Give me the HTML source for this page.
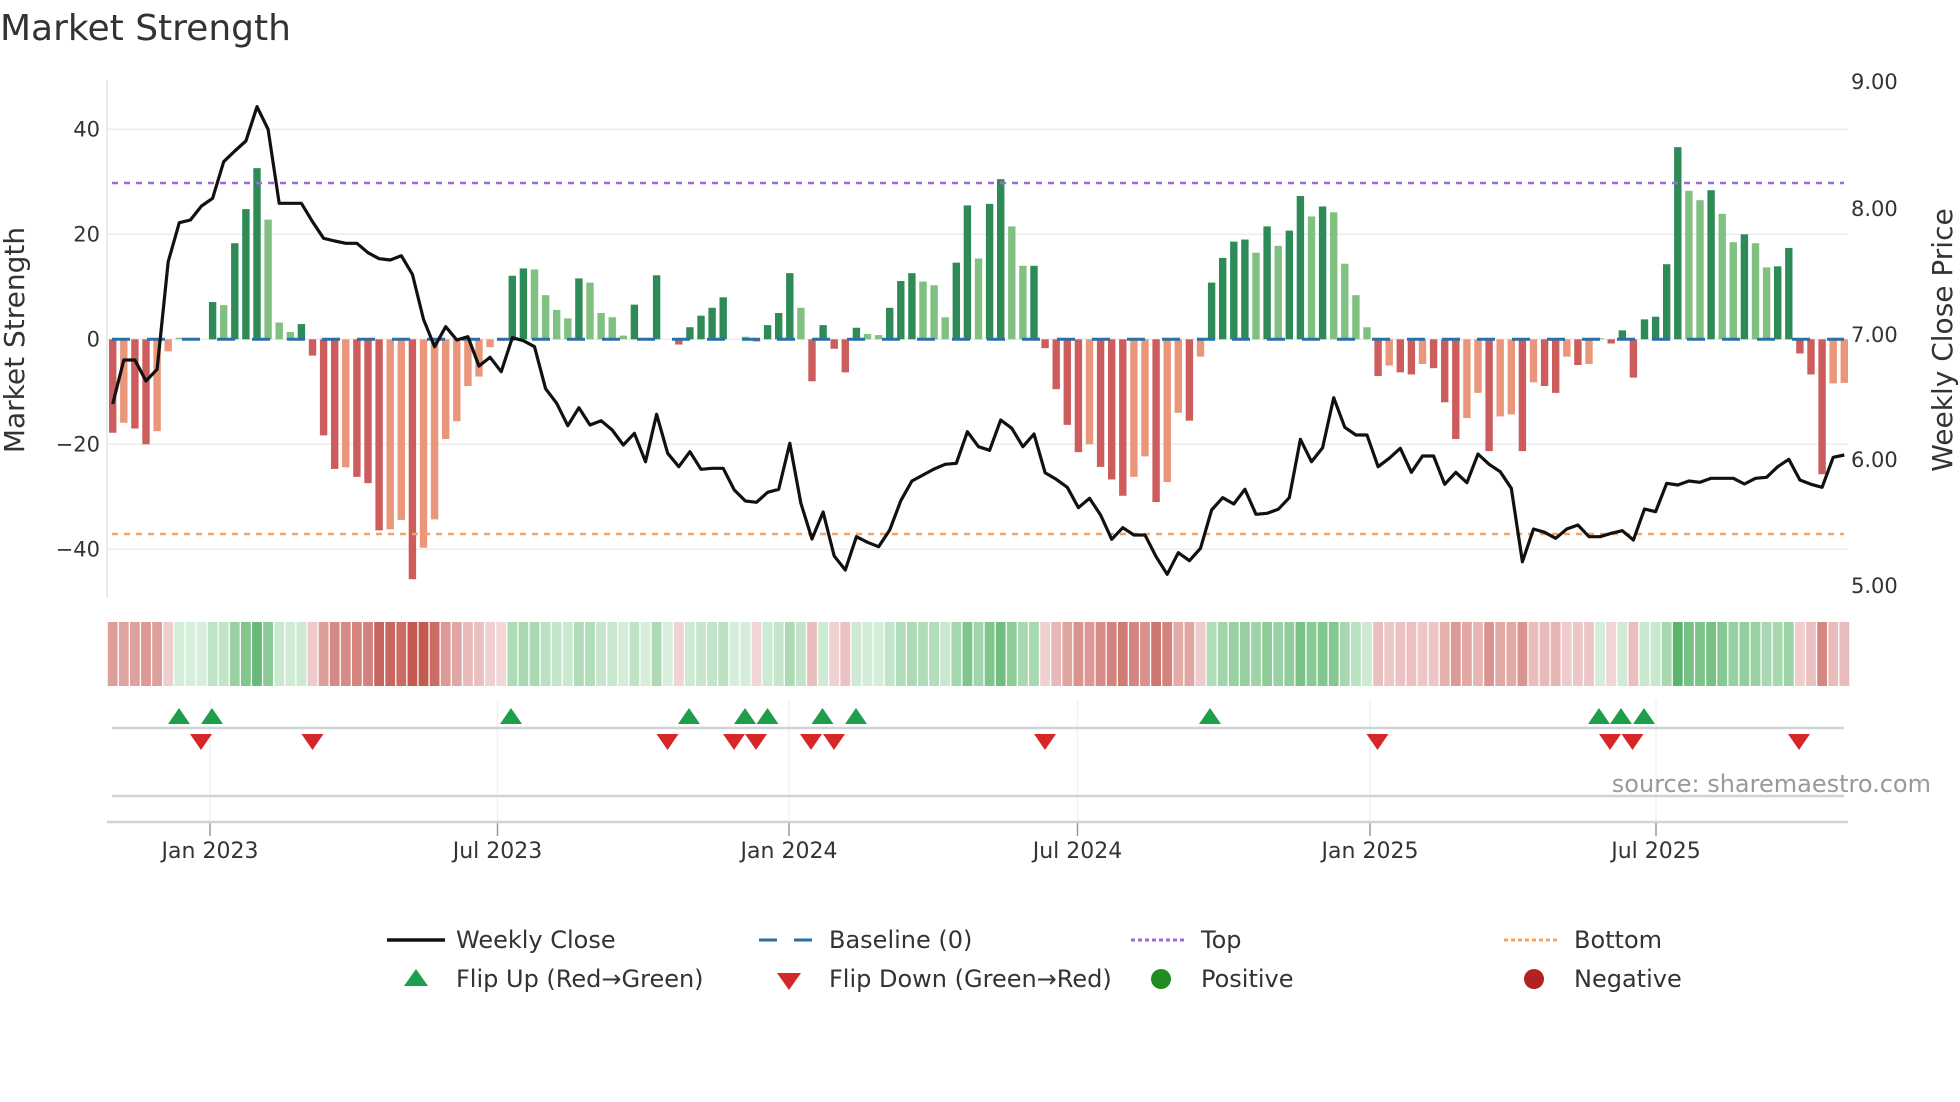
<!DOCTYPE html>
<html><head><meta charset="utf-8"><style>
html,body{margin:0;padding:0;background:#fff;}
svg{display:block;font-family:"DejaVu Sans","Liberation Sans",sans-serif;}
</style></head><body>
<svg id="s" width="1960" height="1102" viewBox="0 0 1960 1102" xmlns="http://www.w3.org/2000/svg">
<rect width="1960" height="1102" fill="#fff"/>
<text x="0" y="40" font-size="36" fill="#333">Market Strength</text>
<g id="grid"></g>
<g id="heat"></g>
<g id="bars"></g>
<line x1="112" y1="339.3" x2="1844" y2="339.3" stroke="#2a6fa6" stroke-width="3" stroke-dasharray="18 17"/>
<line x1="112" y1="183" x2="1844" y2="183" stroke="#9b6ad6" stroke-width="2.5" stroke-dasharray="6 6"/>
<line x1="112" y1="534" x2="1844" y2="534" stroke="#f4a460" stroke-width="2.5" stroke-dasharray="6 6"/>
<polyline id="price" fill="none" stroke="#111" stroke-width="3.2" stroke-linejoin="round"/>
<g id="marks"></g>
<text x="24" y="340" font-size="28" fill="#333" text-anchor="middle" transform="rotate(-90 24 340)">Market Strength</text>
<text x="1944" y="340" font-size="28" fill="#333" text-anchor="middle" transform="rotate(-90 1944 340)" dominant-baseline="middle">Weekly Close Price</text>
<text x="1931" y="792" font-size="24" fill="#999" text-anchor="end">source: sharemaestro.com</text>
<g font-size="24" fill="#333">
<line x1="387" y1="940" x2="445" y2="940" stroke="#111" stroke-width="3.5"/>
<text x="456" y="948">Weekly Close</text>
<line x1="759" y1="940" x2="814" y2="940" stroke="#2a6fa6" stroke-width="3" stroke-dasharray="18 17"/>
<text x="829" y="948">Baseline (0)</text>
<line x1="1131" y1="940" x2="1186" y2="940" stroke="#9b6ad6" stroke-width="3" stroke-dasharray="4 3"/>
<text x="1201" y="948">Top</text>
<line x1="1504" y1="940" x2="1559" y2="940" stroke="#f4a460" stroke-width="3" stroke-dasharray="4 3"/>
<text x="1574" y="948">Bottom</text>
<polygon points="404,986 428,986 416,969" fill="#1e9e4a"/>
<text x="456" y="987">Flip Up (Red→Green)</text>
<polygon points="777,973 801,973 789,990" fill="#d62728"/>
<text x="829" y="987">Flip Down (Green→Red)</text>
<circle cx="1161" cy="979" r="10" fill="#228b22"/>
<text x="1201" y="987">Positive</text>
<circle cx="1534" cy="979" r="10" fill="#b22222"/>
<text x="1574" y="987">Negative</text>
</g>
</svg>
<script>
var NS="http://www.w3.org/2000/svg";
function el(t,a,p){var e=document.createElementNS(NS,t);for(var k in a)e.setAttribute(k,a[k]);if(p)p.appendChild(e);return e;}
var data="D-17.8 L-15.9 D-17 D-20 L-17.5 L-2.3 g0.3 g0 g0 G7.1 g6.5 G18.3 G24.8 G32.6 g22.8 g3.2 g1.4 G2.9 D-3.1 D-18.3 D-24.7 L-24.4 D-26.2 D-27.4 D-36.4 L-36.2 L-34.4 D-45.7 L-39.7 L-34.3 L-19 L-15.6 L-8.9 L-7.1 L-1.5 L-0.3 G12.1 G13.5 g13.3 g8.4 "+
"g5.6 g4 G11.6 g10.8 g5 g4.2 g0.7 G6.6 g0 G12.2 g0 D-1 G2.3 G4.5 G6 G8 g0 g0.5 D-0.4 G2.7 G5 G12.6 g6 D-8 G2.7 D-1.8 D-6.3 G2.2 g1 g0.8 G6 G11.1 G12.6 g11 g10.3 g4.2 G14.6 G25.5 g15.4 G25.8 "+
"G30.5 g21.5 g14 G14 D-1.7 D-9.5 D-16.3 D-21.5 L-20 D-24.3 D-26.7 D-29.8 L-26.2 L-22.3 D-31 L-27.2 L-14 D-15.5 L-3.3 G10.8 G15.5 G18.6 G19 g16.5 G21.5 g17.8 G20.7 G27.3 g23.4 G25.3 g24.2 g14.4 g8.4 g2.3 D-7 L-5 D-6.3 D-6.7 L-4.7 "+
"D-5.5 D-12 D-19 L-15 L-10.2 D-21.3 L-14.7 L-14.3 D-21.3 L-8.2 D-8.9 D-10.2 L-3.3 D-4.9 L-4.7 g0.2 D-0.8 G1.7 D-7.3 G3.8 G4.3 G14.3 G36.6 g28.3 g26.5 G28.4 g23.9 g18.5 G20 g18.3 g13.7 G13.9 G17.4 D-2.7 D-6.7 D-25.7 L-8.4 L-8.3";
var bars=data.split(" ").map(function(s){return [s[0],parseFloat(s.slice(1))];});
var zy=[972,840,840,903,868,545,428,420,378,355,245,213,183,80,148,370,370,370,425,475,483,490,490,518,536,540,527,583,718,800,740,780,770,858,832,875,773,782,800,926,
970,1037,983,1035,1022,1050,1095,1060,1145,1003,1120,1160,1115,1168,1165,1165,1230,1263,1267,1237,1228,1090,1270,1377,1296,1428,1470,1370,1387,1400,1350,1262,1203,1185,1167,1153,1150,1055,1100,1111,
1020,1045,1100,1062,1178,1198,1222,1283,1255,1305,1378,1343,1365,1365,1430,1483,1418,1442,1405,1290,1253,1272,1228,1303,1300,1288,1253,1078,1145,1103,953,1042,1065,1065,1160,1135,1105,1177,1128,
1128,1213,1177,1208,1122,1153,1175,1225,1445,1347,1357,1375,1347,1335,1370,1370,1360,1352,1380,1287,1295,1210,1215,1203,1207,1195,1195,1195,1212,1195,1192,1160,1138,1200,1213,1222,1132,1125];
var col={D:"#cd5c5c",L:"#e9967a",G:"#2e8b57",g:"#80c080"};
var gb=document.getElementById("bars"),gh=document.getElementById("heat"),gg=document.getElementById("grid"),gm=document.getElementById("marks");
var Z=339.3,S=5.25;
[40,20,0,-20,-40].forEach(function(v){var y=Z-v*S;el("line",{x1:107,y1:y,x2:1848,y2:y,stroke:"#ececec","stroke-width":1.5},gg);
var t=el("text",{x:100,y:y+7,"font-size":21,fill:"#333","text-anchor":"end"},gg);t.textContent=(v<0?"\u2212"+(-v):v);});
el("line",{x1:107,y1:80,x2:107,y2:598,stroke:"#e6e6e6","stroke-width":1.5},gg);
[["9.00",82],["8.00",209],["7.00",335],["6.00",460],["5.00",586]].forEach(function(a){var t=el("text",{x:1851,y:a[1]+7,"font-size":21,fill:"#333"},gg);t.textContent=a[0];});
[[210,"Jan 2023"],[497.5,"Jul 2023"],[789,"Jan 2024"],[1077.5,"Jul 2024"],[1370,"Jan 2025"],[1656,"Jul 2025"]].forEach(function(a){
el("line",{x1:a[0],y1:700,x2:a[0],y2:822,stroke:"#eef2f4","stroke-width":1.5},gg);
el("line",{x1:a[0],y1:822,x2:a[0],y2:836,stroke:"#999","stroke-width":1.5},gg);
var t=el("text",{x:a[0],y:858,"font-size":22,fill:"#333","text-anchor":"middle"},gg);t.textContent=a[1];});
el("line",{x1:112,y1:728,x2:1844,y2:728,stroke:"#d0d3d6","stroke-width":2.5},gg);
el("line",{x1:112,y1:796,x2:1844,y2:796,stroke:"#d0d3d6","stroke-width":2.5},gg);
el("line",{x1:107,y1:822,x2:1848,y2:822,stroke:"#d0d3d6","stroke-width":2.5},gg);
function mix(a,b,t){return "rgb("+[0,1,2].map(function(i){return Math.round(a[i]+(b[i]-a[i])*t);}).join(",")+")";}
var pts=[];
bars.forEach(function(b,i){
 var x=112.7+11.1*i,v=b[1];
 if(Math.abs(v)>0.05){var h=Math.abs(v)*S;el("rect",{x:x-3.7,y:v>0?Z-h:Z,width:7.4,height:h,fill:col[b[0]]},gb);}
 var t=Math.min(Math.abs(v)/40,1);
 var c=(b[0]=="D"||b[0]=="L")?mix([242,214,214],[196,90,82],t):mix([214,238,218],[80,174,98],t);
 el("rect",{x:x-4.9,y:622,width:9.8,height:64,fill:c},gh);
 pts.push(x.toFixed(1)+","+(80+zy[i]/3).toFixed(1));
});
document.getElementById("price").setAttribute("points",pts.join(" "));
[179,212,511,689,745,767.5,822.5,856,1210,1599,1621,1644].forEach(function(x){el("polygon",{points:(x-11)+",724 "+(x+11)+",724 "+x+",708",fill:"#1e9e4a"},gm);});
[201,312.5,667.5,734,756,811,834,1045,1377.5,1610,1632.5,1799].forEach(function(x){el("polygon",{points:(x-11)+",734 "+(x+11)+",734 "+x+",750",fill:"#d62728"},gm);});
</script>
</body></html>
